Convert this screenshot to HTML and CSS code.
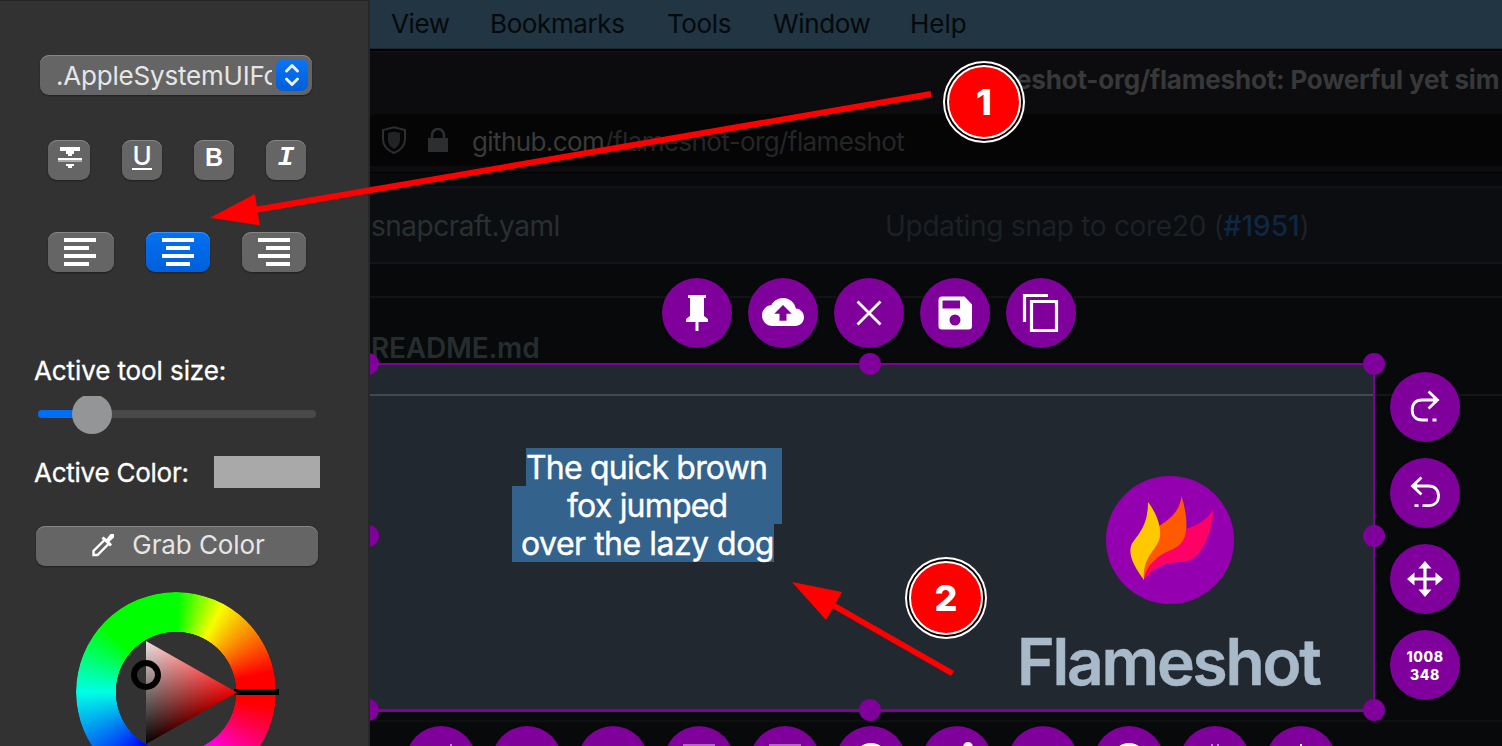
FILE: index.html
```html
<!DOCTYPE html>
<html lang="en">
<head>
<meta charset="utf-8">
<title>Flameshot</title>
<link rel="stylesheet" href="styles.css">
</head>
<body>
<div class="app">
  <aside class="panel">
    <div class="font-select"><span class="font-name">.AppleSystemUIFo</span>
      <span class="stepper"><svg width="32" height="32" viewBox="0 0 32 32"><path d="M10.5 12 16 6.5 21.5 12M10.5 20 16 25.500 21.500 20"/></svg></span>
    </div>
    <div class="style-row">
      <button class="btn strike"><svg width="42" height="40" viewBox="0 0 42 40"><path fill="#fff" d="M12 7h20v4h-6v3h-2v2h-4v-2h-2v-3h-6zM10 18h24v2H10zM18 24h8v2h-2v2h-4v-2h-2z"/><path fill="#a9a9a9" d="M10 20h24v2H10z"/></svg></button>
      <button class="btn"><span class="glyph under">U</span></button>
      <button class="btn"><span class="glyph bold">B</span></button>
      <button class="btn"><span class="glyph ital">I</span></button>
    </div>
    <div class="align-row">
      <button class="btn wide first"><svg width="66" height="40"><path d="M16 8h32M16 16h25M16 24h32M16 32h25"/></svg></button>
      <button class="btn wide active"><svg width="64" height="40"><path d="M16 8h32M20 16h24M16 24h32M20 32h24"/></svg></button>
      <button class="btn wide"><svg width="64" height="40"><path d="M16 8h32M24 16h24M16 24h32M24 32h24"/></svg></button>
    </div>
    <div class="label size-label">Active tool size:</div>
    <div class="slider"><span class="fill"></span><span class="thumb"></span></div>
    <div class="color-row"><span class="label color-label">Active Color:</span><span class="swatch"></span></div>
    <button class="btn grab"><svg width="28" height="28" viewBox="0 0 28 28"><path fill="none" stroke="#fff" stroke-width="2.400" d="M15 9.500 4.500 20v4h4L19 13.500"/><path fill="#fff" d="m12.500 7.500 2-2 3 2.500 4-5h3.500v3.500l-4.500 4 2.500 3-2 2z"/></svg><span>Grab Color</span></button>
    <div class="wheel">
      <span class="ring"></span><span class="hue-mark"></span><span class="tri"></span><span class="picker"></span>
    </div>
  </aside>

  <main class="desktop">
    <nav class="menubar"><span class="m1">View</span><span class="m2">Bookmarks</span><span class="m3">Tools</span><span class="m4">Window</span><span class="m5">Help</span></nav>
    <div class="titlebar"><span>eshot-org/flameshot: Powerful yet sim</span></div>
    <div class="urlbar">
      <svg width="26" height="28" viewBox="0 0 26 28"><path fill="none" stroke="#2d2e30" stroke-width="2" d="M13 1.200 24 4v9c0 7-5 11.500-11 14C7 24.500 2 20 2 13V4z"/><path fill="#222326" d="M13 5.500 19 7v6c0 5-2 7.500-6 10-4-2.500-6-5-6-10V7z"/></svg>
      <svg class="lock" width="20" height="24" viewBox="0 0 20 24"><path fill="#2d2e30" d="M0 10h20v14H0z"/><path fill="none" stroke="#2d2e30" stroke-width="2.600" d="M4 11V7a6 6 0 0 1 12 0v4"/></svg>
      <span class="url"><b>github.com</b>/flameshot-org/flameshot</span>
    </div>
    <div class="gap"></div>
    <div class="file-row"><span class="file">snapcraft.yaml</span><span class="commit">Updating snap to core20 (<a>#1951</a>)</span></div>
    <div class="readme"><span>README.md</span></div>
    <div class="page-rest"></div>

    <section class="capture">
      <div class="capture-line"></div>
      <div class="note"><div class="l1">The quick brown</div><div class="l2">fox jumped</div><div class="l3">over the lazy dog</div></div>
      <div class="brand">
        <svg width="128" height="128" viewBox="0 0 128 128"><circle cx="64" cy="64" r="64" fill="#9400b0"/>
          <path fill="#ff0066" d="M39 104C37 82 58 60 80 53 93 49 103 42 107 33.500 107 51 100 69 92 78 83 88 76 85 65 87 53 89 44 95 39 104z"/>
          <path fill="#ff5a00" d="M38 104C34 82 43 60 53 50 66 42 74 34 75.500 20 80 34 82 50 79 60 74 75 60 73 50 83 42 90 39 96 38 104z"/>
          <path fill="#ffc800" d="M38 104C28 91 20 76 27 66 36 54 42 46 42 26 51 38 55 50 54 60 52 74 36 80 38 104z"/></svg>
        <div class="brand-name">Flameshot</div>
      </div>
      <i class="h tl"></i><i class="h tc"></i><i class="h tr"></i><i class="h ml"></i><i class="h mr"></i><i class="h bl"></i><i class="h bc"></i><i class="h br"></i>
    </section>

    <div class="tools top">
      <span class="tool"><svg viewBox="0 0 70 70"><path fill="#fff" d="M26 17h18v3h-2v18l4 3v3h-9.500v9h-3v-9H24v-3l4-3V20h-2z"/></svg></span>
      <span class="tool"><svg viewBox="0 0 70 70"><path fill="#fff" transform="translate(14 13) scale(1.750)" d="M19.350 10.040C18.670 6.590 15.640 4 12 4 9.110 4 6.600 5.640 5.350 8.040 2.340 8.360 0 10.910 0 14c0 3.310 2.690 6 6 6h13c2.760 0 5-2.240 5-5 0-2.640-2.050-4.780-4.650-4.960zM14 13v4h-4v-4H7l5-5 5 5z"/></svg></span>
      <span class="tool"><svg viewBox="0 0 70 70"><path class="s" d="m23.500 23.500 23 23m0-23-23 23"/></svg></span>
      <span class="tool"><svg viewBox="0 0 70 70"><path fill="#fff" fill-rule="evenodd" d="M22 18.500h22.500l7.500 8V48q0 3.500-3.500 3.500H22q-3.500 0-3.500-3.500V22q0-3.500 3.500-3.500zM22.500 22.500v8H40v-8zM35 36.500a5.500 5.500 0 1 0 0 11 5.500 5.500 0 1 0 0-11z"/></svg></span>
      <span class="tool"><svg viewBox="0 0 70 70"><path class="s c" d="M42 17.500H18.500V44M25.500 23.500h25V52.500h-25z"/></svg></span>
    </div>
    <div class="tools right">
      <span class="tool"><svg viewBox="0 0 70 70"><path class="s" d="M46 28H32C25.500 28 22.200 32 22.200 38S26 48 32 48h6M42.500 48h4M38.500 19.500l9 8.500-9 8.500"/><path fill="#fff" d="m43 24.500 6 3.500-6 3.500z"/></svg></span>
      <span class="tool"><svg viewBox="0 0 70 70"><path class="s" d="M24 28h14.500c6.500 0 10 4 10 10s-4 9.700-10 9.700h-6M24.500 47.700h4M31.500 19.500l-9 8.500 9 8.500"/><path fill="#fff" d="m27 24.500-6 3.500 6 3.500z"/></svg></span>
      <span class="tool"><svg viewBox="0 0 70 70"><path class="s c" d="M21 35h28M35 21v28"/><path fill="#fff" d="m35 17 6.500 7.500h-13zM35 53l6.500-7.500h-13zM17 35l7.500-6.500v13zM53 35l-7.500-6.500v13z"/></svg></span>
      <span class="tool size">1008<br>348</span>
    </div>
    <div class="tools bottom">
      <span class="tool"><svg viewBox="0 0 70 70"><path fill="#c17fcd" d="M44 18h2v4h-2z"/></svg></span>
      <span class="tool"></span>
      <span class="tool"></span>
      <span class="tool"><svg viewBox="0 0 70 70"><path fill="#b566c4" d="M19 18h32v4H19z"/></svg></span>
      <span class="tool"><svg viewBox="0 0 70 70"><path fill="#b566c4" d="M19 18h32v4H19z"/></svg></span>
      <span class="tool"><svg viewBox="0 0 70 70"><circle cx="35" cy="34" r="17" fill="#fff"/></svg></span>
      <span class="tool"><svg viewBox="0 0 70 70"><circle cx="46" cy="21" r="5" fill="#fff"/></svg></span>
      <span class="tool"></span>
      <span class="tool"><svg viewBox="0 0 70 70"><circle cx="35" cy="34" r="17" fill="#fff"/></svg></span>
      <span class="tool"><svg viewBox="0 0 70 70"><path stroke="#c17fcd" stroke-width="2" d="M32 18v6M38 18v6"/></svg></span>
      <span class="tool"><svg viewBox="0 0 70 70"><path stroke="#fff" stroke-width="2" d="M35 18v6"/></svg></span>
    </div>
  </main>

  <svg class="arrows" width="1502" height="746"><g stroke="#f00" stroke-width="6"><path d="M931 94 250 210.800M952.500 673.500 830 603.500"/></g><path fill="#f00" d="M210 217.700 255 194l4.800 31.400zM792 582l50 10-16 28z"/></svg>
  <span class="badge one">1</span>
  <span class="badge two">2</span>
</div>
</body>
</html>
```
FILE: styles.css
```css
* { box-sizing: border-box; }
body { margin: 0; background: #08090b; font-family: Inter, "Liberation Sans", sans-serif; }
svg { display: block; }
.app { position: relative; width: 1502px; height: 746px; overflow: hidden; display: flex; }

.panel { width: 370px; height: 746px; overflow: hidden; background: #323232; border-right: 2px solid #272727; border-top: 1px solid #222; display: flex; flex-direction: column; align-items: flex-start; color: #fff; }
.btn { margin: 0; padding: 0; border: 0; font: inherit; color: #e6e6e6; background: #656565; border-radius: 9px; width: 40px; height: 40px; flex: none; display: flex; justify-content: center; box-shadow: inset 0 1px 0 #858585, 0 1px 2px rgba(0,0,0,.4); }
.font-select { margin: 54px 0 0 40px; width: 272px; height: 40px; border-radius: 9px; background: #656565; box-shadow: inset 0 1px 0 #858585, 0 1px 2px rgba(0,0,0,.4); display: flex; align-items: center; padding-left: 16px; }
.font-name { width: 216px; overflow: hidden; white-space: nowrap; font-size: 26px; line-height: 38px; padding-top: 2px; letter-spacing: -.2px; color: #e6e6e6; }
.stepper { margin-left: 4px; width: 32px; height: 32px; border-radius: 7px; background: linear-gradient(#0a74f5, #005fd8); }
.stepper path { fill: none; stroke: #e8f0fd; stroke-width: 3; stroke-linecap: round; stroke-linejoin: round; }
.style-row { margin: 45px 0 0 48px; width: 258px; display: flex; justify-content: space-between; }
.strike { width: 42px; }
.glyph { color: #fff; line-height: 34px; height: 34px; }
.under { font-size: 26px; font-weight: 500; border-bottom: 2px solid #fff; height: 30px; width: 20px; line-height: 32px; display: flex; justify-content: center; }
.bold { font: 800 25px/34px "Liberation Sans", sans-serif; }
.ital { font: italic bold 28px/35px "Liberation Mono", monospace; }
.align-row { margin: 52px 0 0 48px; width: 258px; display: flex; justify-content: space-between; }
.wide { width: 64px; }
.wide.first { width: 66px; }
.wide path { stroke: #fff; stroke-width: 4; }
.btn.active { background: linear-gradient(#0471f3, #005fd9); box-shadow: inset 0 1px 0 #3b90f7, 0 1px 2px rgba(0,0,0,.4); }
.label { font-size: 26px; line-height: 32px; white-space: nowrap; letter-spacing: -.1px; -webkit-text-stroke: .3px #fff; }
.size-label { margin: 83px 0 0 34px; }
.slider { position: relative; margin: 23px 0 0 38px; width: 278px; height: 8px; border-radius: 4px; background: #494949; }
.fill { display: block; width: 50px; height: 8px; border-radius: 4px; background: #006ef4; }
.thumb { position: absolute; left: 34px; top: -16px; width: 40px; height: 40px; border-radius: 50%; background: #949597; clip-path: inset(2px 0 0); }
.color-row { margin: 38px 0 0 34px; width: 286px; height: 32px; display: flex; justify-content: space-between; align-items: center; }
.color-label { letter-spacing: -.25px; padding-top: 2px; }
.swatch { width: 106px; height: 32px; background: #a9a9a9; }
.grab { margin: 38px 0 0 36px; width: 282px; align-items: center; gap: 15px; font-size: 26px; line-height: 36px; padding: 0 0 2px; letter-spacing: -.1px; }
.wheel { position: relative; flex: none; margin: 26px 0 0 76px; width: 204px; height: 200px; }
.ring { position: absolute; left: 0; top: 0; width: 200px; height: 200px; border-radius: 50%; background: conic-gradient(from 90deg, #f00 0deg 8deg, #f0f 62deg, #00f 122deg, #00ffe6 180deg, #0f0 222deg 271deg, #f8ff00 298deg, #f00 348deg); -webkit-mask: radial-gradient(circle, transparent 60px, #000 60.500px); mask: radial-gradient(circle, transparent 60px, #000 60.500px); }
.hue-mark { position: absolute; left: 158px; top: 97px; width: 45px; height: 6px; background: #000; }
.tri { position: absolute; left: 70px; top: 49px; width: 91px; height: 103px; clip-path: polygon(0 0, 100% 50%, 0 100%); background: linear-gradient(330deg, #000 33.300%, #0df0f0 100%), linear-gradient(30deg, #000 0, #f0000d 66.700%); background: linear-gradient(330deg, #000 33.300%, #00e0e0 100%), linear-gradient(30deg, #000 0, #f00000 66.700%); background-blend-mode: screen; }
.picker { position: absolute; left: 55px; top: 68px; width: 30px; height: 30px; border: 6px solid #000; border-radius: 50%; }

.desktop { position: relative; width: 1132px; height: 746px; overflow: hidden; display: flex; flex-direction: column; background: #08090b; }
.menubar { height: 49px; flex: none; background: #213542; border-bottom: 1px solid #182833; color: #05090c; font-size: 26px; line-height: 47px; letter-spacing: -.38px; display: flex; padding-left: 21px; }
.m1 { width: 99px; } .m2 { width: 177px; } .m3 { width: 106px; } .m4 { width: 137px; } .m5 { letter-spacing: 0; }
.titlebar { height: 65px; flex: none; background: #0c0c0e; border-top: 2px solid #000; box-shadow: inset 0 1px 0 #141414; color: #37383a; font-size: 26px; font-weight: 700; line-height: 57px; padding-left: 646px; letter-spacing: -.2px; white-space: nowrap; overflow: hidden; }
.urlbar { height: 59px; flex: none; margin: 0; background: linear-gradient(#050506 52px, #0c0c0e 52px); border-bottom: 1px solid #020203; display: flex; align-items: flex-start; padding: 12px 0 0 11px; border-radius: 8px 0 0 0; }
.lock { margin: 2px 0 0 21px; }
.url { margin: -2px 0 0 24px; font-size: 26px; line-height: 35px; letter-spacing: -.6px; color: #252628; white-space: nowrap; }
.url b { font-weight: 400; color: #3a3a3b; }
.gap { height: 13px; flex: none; }
.file-row { height: 78px; flex: none; background: #0b0d11; border-top: 2px solid #101215; border-bottom: 2px solid #121418; display: flex; font-size: 28px; line-height: 77px; white-space: nowrap; color: #283032; }
.file { width: 515px; padding-left: 1px; letter-spacing: -.5px; }
.commit { color: #1c2125; letter-spacing: -.3px; }
.commit a { color: #0f2743; font-weight: 500; letter-spacing: 0; }
.readme { height: 132px; flex: none; border-bottom: 2px solid #13161a; font-size: 28px; font-weight: 600; letter-spacing: -.2px; color: #262d2e; line-height: 35px; background: linear-gradient(transparent 32px, #111315 32px, #111315 34px, transparent 34px); padding: 67px 0 0 1px; }
.page-rest { height: 326px; flex: none; border-bottom: 2px solid #0d0f13; }

.capture { position: absolute; left: -3px; top: 363px; width: 1008px; height: 349px; background: #22282f; border: solid #80009b; border-width: 2px 2px 3px 0; }
.capture-line { margin-top: 29px; height: 2px; background: #424954; }
.note { position: absolute; left: 145px; top: 83px; width: 270px; color: #fff; font-size: 32px; line-height: 40px; white-space: nowrap; -webkit-text-stroke: .4px #fff; }
.note div { height: 38px; background: #33638d; }
.l1 { margin-left: 14px; letter-spacing: -.8px; }
.l2 { padding-left: 55px; letter-spacing: -.8px; }
.l3 { width: 262px; padding-left: 9px; letter-spacing: -.5px; }
.brand { position: absolute; left: 739px; top: 111px; }
.brand-name { margin: 20px 0 0 -89px; width: 304px; font-size: 64px; line-height: 76px; font-weight: 600; color: #a8bac9; letter-spacing: -2.2px; -webkit-text-stroke: .5px #a8bac9; }
.h { position: absolute; width: 22px; height: 22px; border-radius: 50%; background: #80009b; }
.tl, .tc, .tr { top: -12px; } .ml, .mr { top: 160px; } .bl, .bc, .br { top: 334px; }
.tl, .ml, .bl { left: -10px; } .tc, .bc { left: 492px; } .tr, .mr, .br { left: 996px; }

.tools { position: absolute; display: flex; gap: 16px; }
.top { left: 292px; top: 278px; }
.right { left: 1020px; top: 372px; flex-direction: column; }
.bottom { left: 36px; top: 726px; }
.tool { flex: none; width: 70px; height: 70px; border-radius: 50%; background: #80009b; box-shadow: 1px 2px 3px rgba(0,0,0,.6); }
.s { fill: none; stroke: #fff; stroke-width: 2.800; }
.s.c { stroke-width: 3.200; }
.size { color: #fff; font-size: 14px; line-height: 18px; font-weight: 800; text-align: center; letter-spacing: .6px; padding-top: 18px; }

.arrows { position: absolute; left: 0; top: 0; }
.badge { position: absolute; width: 74px; height: 74px; border: 2px solid #fff; border-radius: 50%; background: #f00; box-shadow: 0 0 0 2px #100, 0 0 0 4px #fff; color: #fff; font-size: 36px; font-weight: 800; line-height: 71px; text-align: center; }
.one { left: 947px; top: 65px; }
.two { left: 909px; top: 561px; }
```
